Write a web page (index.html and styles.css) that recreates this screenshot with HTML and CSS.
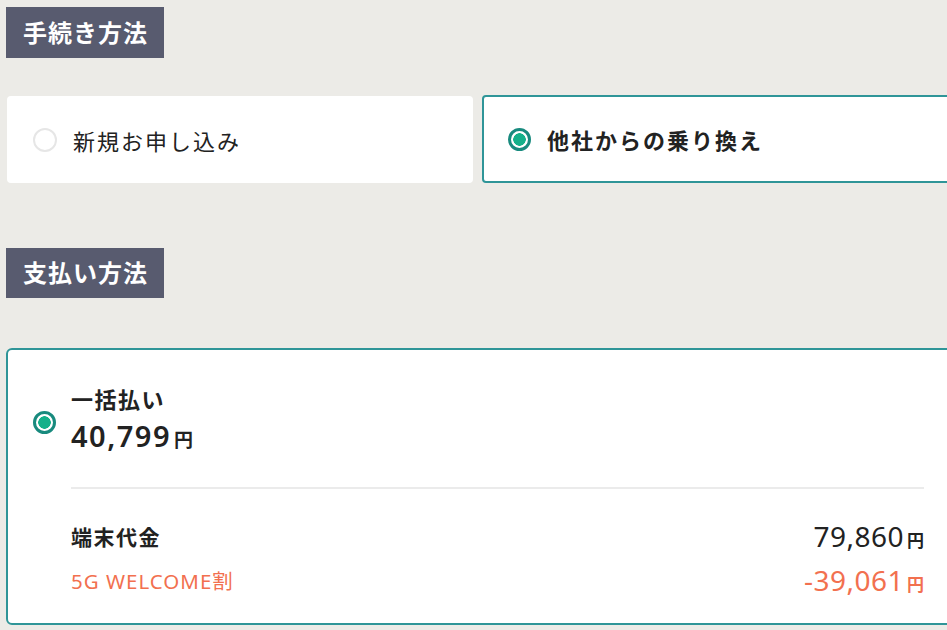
FILE: index.html
```html
<!DOCTYPE html>
<html lang="ja">
<head>
    <meta charset="UTF-8">
    <meta name="viewport" content="width=device-width, initial-scale=1.0">
    <title>お手続き</title>
    <link rel="stylesheet" href="styles.css">
</head>
<body>
    <div class="page">
        <h2 class="section-title">手続き方法</h2>

        <div class="options">
            <label class="option">
                <span class="radio"></span>
                <span class="option-label">新規お申し込み</span>
            </label>
            <label class="option selected">
                <span class="radio"></span>
                <span class="option-label">他社からの乗り換え</span>
            </label>
        </div>

        <h2 class="section-title title-pay">支払い方法</h2>

        <div class="pay-card selected">
            <div class="pay-head">
                <span class="radio"></span>
                <div class="pay-main">
                    <div class="pay-name">一括払い</div>
                    <div class="pay-price">40,799<span class="yen">円</span></div>
                </div>
            </div>

            <div class="pay-detail">
                <div class="detail-row">
                    <span class="detail-label">端末代金</span>
                    <span class="detail-value">79,860<span class="yen">円</span></span>
                </div>
                <div class="detail-row discount">
                    <span class="detail-label">5G WELCOME割</span>
                    <span class="detail-value">-39,061<span class="yen">円</span></span>
                </div>
            </div>
        </div>
    </div>
</body>
</html>
```

FILE: styles.css
```css
:root {
    --bg-color: #ecebe7;
    --tag-bg: #585b6f;
    --teal: #2f9598;
    --dot: #14b08a;
    --text-color: #222;
    --orange: #f2704f;
}

body {
    margin: 0;
    background-color: var(--bg-color);
    color: var(--text-color);
    font-family: "Noto Sans", "Noto Sans CJK JP", sans-serif;
    overflow: hidden;
}

.page {
    width: 950px;
    padding: 7px 0 0 6px;
}

.section-title {
    display: inline-block;
    margin: 0;
    padding: 0 16px 0 17px;
    height: 51px;
    line-height: 51px;
    background: var(--tag-bg);
    color: white;
    font-size: 24px;
    font-weight: 700;
    letter-spacing: 1px;
}

.title-pay {
    height: 50px;
    line-height: 50px;
    margin-top: 65px;
}

.options {
    display: grid;
    grid-template-columns: 466px 1fr;
    gap: 9px;
    margin: 38px 0 0 1px;
}

.option {
    display: flex;
    align-items: center;
    gap: 16px;
    height: 85px;
    padding-left: 25px;
    background: white;
    border: 1px solid transparent;
    border-radius: 4px;
}

.option.selected {
    border: 2px solid var(--teal);
    height: 84px;
    margin-top: -1px;
    padding-left: 24px;
}

.option-label {
    font-size: 22px;
    letter-spacing: 2px;
}

.option.selected .option-label {
    font-weight: 700;
}

.radio {
    flex: none;
    box-sizing: border-box;
    width: 24px;
    height: 24px;
    border: 2px solid #e6e6e6;
    border-radius: 50%;
}

.selected .radio {
    width: 23px;
    height: 23px;
    border: 3px solid #188a7e;
    background: radial-gradient(circle, var(--dot) 0 6px, white 6.5px);
}

.pay-card {
    margin-top: 50px;
    background: white;
    border: 2px solid var(--teal);
    border-radius: 6px;
    padding: 34px 30px 25px 25px;
}

.pay-head {
    display: flex;
    align-items: center;
    gap: 15px;
}

.pay-main {
    flex: 1;
}

.pay-name {
    font-size: 22px;
    font-weight: 700;
    line-height: 30px;
    letter-spacing: 1.5px;
}

.pay-price {
    margin-top: 2px;
    font-size: 29px;
    font-weight: 600;
    line-height: 40px;
    letter-spacing: 1.5px;
}

.yen {
    margin-left: 3px;
    font-size: 19px;
    font-weight: 700;
    letter-spacing: 0;
}

.pay-detail {
    margin: 27px 0 0 38px;
    border-top: 2px solid #ebebeb;
    padding-top: 29px;
}

.detail-row {
    display: flex;
    justify-content: space-between;
    align-items: center;
    height: 36px;
}

.detail-row + .detail-row {
    margin-top: 8px;
}

.detail-label {
    font-size: 21px;
    font-weight: 700;
    letter-spacing: 1.5px;
}

.detail-value {
    font-size: 28px;
    letter-spacing: 0.5px;
}

.detail-value .yen {
    font-size: 17px;
}

.discount {
    color: var(--orange);
}

.discount .detail-label {
    font-size: 20.5px;
    font-weight: 400;
    letter-spacing: 1px;
}
```
